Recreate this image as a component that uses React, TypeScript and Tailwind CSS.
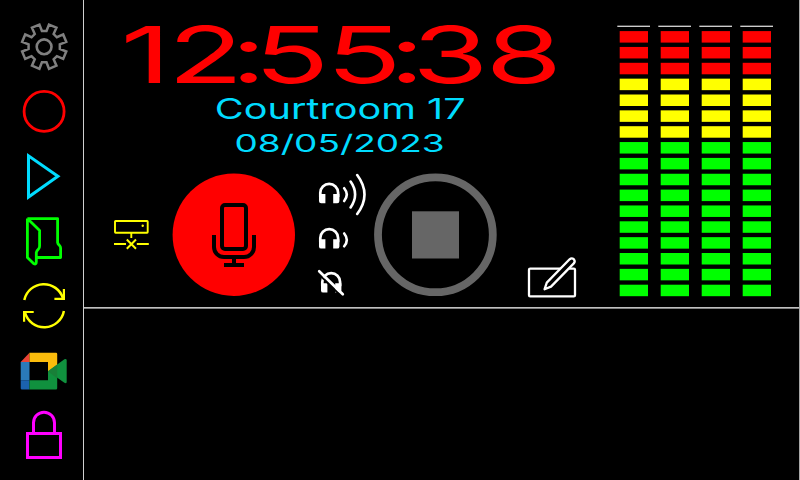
import type { ReactNode } from "react";

const CYAN = "#00dcff";

// Each sidebar icon sits in its own 65px row; the viewBox uses screen units.
function NavIcon({ y, label, children }: { y: number; label: string; children: ReactNode }) {
  return (
    <button aria-label={label} className="block h-[65px] w-full shrink-0">
      <svg className="block h-full w-full" viewBox={`0 ${y} 83 65`} fill="none">
        {children}
      </svg>
    </button>
  );
}

function Control({ x, w, label, children }: { x: number; w: number; label: string; children: ReactNode }) {
  return (
    <button aria-label={label} className="block h-full shrink-0" style={{ width: w }}>
      <svg className="block h-full w-full" viewBox={`${x} 168 ${w} 139`} fill="none">
        {children}
      </svg>
    </button>
  );
}

const gearPoints = Array.from({ length: 8 }, (_, k) =>
  [
    [8.3, 15.8],
    [12.2, 22.6],
    [32.8, 22.6],
    [36.7, 15.8],
  ].map(([deg, r]) => {
    const a = ((k * 45 + deg) * Math.PI) / 180;
    return `${(44.2 + r * Math.sin(a)).toFixed(2)},${(46.7 - r * Math.cos(a)).toFixed(2)}`;
  }),
)
  .flat()
  .join(" ");

function Headphones() {
  return (
    <>
      <path d="M320.3 197v-4.2a8.9 8.9 0 0 1 17.8 0v4.2" stroke="#fff" strokeWidth="2.7" />
      <path d="M319 194h6.4v9.3h-4.2a2.2 2.2 0 0 1-2.2-2.2zM333.2 194h6.2v7.1a2.2 2.2 0 0 1-2.2 2.2h-4z" fill="#fff" />
    </>
  );
}

function Meter() {
  return (
    <svg className="block h-full w-[204px] shrink-0" viewBox="595 0 204 307" role="img" aria-label="Level meters">
      {[620, 661, 702, 743].map((x) => (
        <g key={x}>
          <rect x={x - 2.7} y="25.7" width="32.7" height="1.1" fill="#fff" />
          {Array.from({ length: 17 }, (_, i) => (
            <rect
              key={i}
              x={x - 0.3}
              y={31.1 + i * 15.85}
              width="28.3"
              height="11.5"
              fill={i < 3 ? "#ff0000" : i < 7 ? "#ffff00" : "#00ff00"}
            />
          ))}
        </g>
      ))}
    </svg>
  );
}

export default function App() {
  return (
    <div className="flex h-[480px] w-[800px] overflow-hidden bg-black font-['Inter',sans-serif]">
      <nav className="flex w-[83px] shrink-0 flex-col pt-3.5">
        <NavIcon y={14} label="Settings">
          <polygon points={gearPoints} stroke="#808080" strokeWidth="2.5" />
          <circle cx="44.1" cy="46.8" r="7.4" stroke="#808080" strokeWidth="2.6" />
        </NavIcon>
        <NavIcon y={79} label="Record">
          <circle cx="44.1" cy="111.4" r="20" stroke="#f00" strokeWidth="2.8" />
        </NavIcon>
        <NavIcon y={144} label="Play">
          <path d="M28.5 155.8V197L57.9 176.3z" stroke={CYAN} strokeWidth="3" />
        </NavIcon>
        <NavIcon y={209} label="Files">
          <path
            d="M27.4 218.6H57.6V242.5Q57.8 244 59.5 245.5Q60.6 246.6 60.6 248V257.5H36.3M27.4 218.6V257.5L33.6 263.5Q36.3 265 36.3 262V252.5Q36.6 250.8 38.5 249Q39.6 248 39.6 246V230.5L27.4 218.6"
            stroke="#0f0"
            strokeWidth="2.8"
            strokeLinejoin="round"
          />
        </NavIcon>
        <NavIcon y={274} label="Sync">
          <path d="M24.3 300A20 20 0 0 1 63 298.4M63.9 311A20 20 0 0 1 25 312.6" stroke="#ff0" strokeWidth="2.5" />
          <path d="M54.4 298.9H63.9V289M33.7 312H24.1V321.8" stroke="#ff0" strokeWidth="2.2" />
        </NavIcon>
        <NavIcon y={339} label="Meet">
          <path d="M20.7 362L29.5 352.8V362z" fill="#ea4335" />
          <path d="M20.7 362h8.8v18.3h-8.8z" fill="#2a7ab9" />
          <path d="M20.7 380.3h8.8v9.2H22a1.3 1.3 0 0 1-1.3-1.3z" fill="#1b62ae" />
          <path d="M29.5 352.8H56a1.2 1.2 0 0 1 1.2 1.2v12l-9.2 6V362H29.5z" fill="#fbbc0c" />
          <path d="M29.5 380.3H48V371l9.2 5v12.3a1.2 1.2 0 0 1-1.2 1.2H29.5z" fill="#10913e" />
          <path d="M48 371.2L64.4 359.2q2.3-.8 2.3 1.2v21.5q-.2 2-2.3.9z" fill="#10913e" />
          <path d="M48 371.2L57.2 364.4v14z" fill="#188038" />
        </NavIcon>
        <NavIcon y={404} label="Lock">
          <path d="M27.5 433.5h33v24h-33zM33.5 433v-10.3a10.5 10.5 0 0 1 21 0V433" stroke="#f0f" strokeWidth="3" />
        </NavIcon>
      </nav>

      <div className="flex w-[717px] flex-col border-l border-r border-l-[#d0d0d0] border-r-[#a8a8a8]">
        <div className="flex h-[309px] border-b border-[#808080]">
          <div className="flex h-[308px] w-full border-b border-[#c0c0c0] pl-px">
            <main className="flex w-[510px] shrink-0 flex-col pt-2.5 text-center whitespace-nowrap">
              <div className="flex h-[89px] items-center justify-center pt-0.5">
                <time className="block scale-x-[1.58] text-[78.5px] leading-none font-normal tracking-[-2px] text-[#f00]">
                  1<span className="tracking-[-8px]">2:</span>5<span className="tracking-[-8px]">5:</span>38
                </time>
              </div>
              <div className="flex h-[19px] items-center justify-center">
                <h1 className="relative top-px scale-x-[1.39] text-[28.5px] leading-none font-normal text-[#00dcff]">
                  Courtroom 17
                </h1>
              </div>
              <div className="flex h-[50px] items-center justify-center pt-px">
                <p className="scale-x-[1.51] text-[24.5px] leading-none font-normal text-[#00dcff]">08/05/2023</p>
              </div>
              <div className="flex h-[139px]">
                <Control x={85} w={80} label="Network disconnected">
                  <rect x="115" y="221" width="32.7" height="11.7" rx="0.6" stroke="#ff0" strokeWidth="1.9" />
                  <circle cx="142.7" cy="225.8" r="1.2" fill="#ff0" />
                  <path d="M131.3 233v5M114 244h12M136.8 244h12" stroke="#ff0" strokeWidth="1.9" />
                  <path d="M126.8 239.5l9.2 9.2M136 239.5l-9.2 9.2" stroke="#ff0" strokeWidth="2" />
                </Control>
                <Control x={165} w={140} label="Microphone">
                  <circle cx="233.8" cy="234.8" r="61.2" fill="#f00" />
                  <rect x="222" y="205" width="24" height="44" rx="3" stroke="#000" strokeWidth="4" />
                  <path d="M214 235v12a10 10 0 0 0 10 10h20a10 10 0 0 0 10-10v-12M234 257v8M224 265h20" stroke="#000" strokeWidth="4" />
                </Control>
                <Control x={305} w={65} label="Headphone volume">
                  <Headphones />
                  <g stroke="#fff" strokeWidth="2.6" strokeLinecap="round">
                    <path d="M344.2 188.2q5.2 6.4 0 12.8M350.6 181.6q9 12.8 0 25.8M357.2 175q14.6 19.6 0 39" />
                  </g>
                  <g transform="translate(0 45.3)">
                    <Headphones />
                    <path d="M344.2 188.2q5.2 6.4 0 12.8" stroke="#fff" strokeWidth="2.6" strokeLinecap="round" />
                  </g>
                  <g transform="translate(2 89.3)">
                    <Headphones />
                  </g>
                  <path d="M318.2 273.6L341.4 296.2" stroke="#000" strokeWidth="2" />
                  <path d="M319.2 271.2L342.8 294.2" stroke="#fff" strokeWidth="2.7" strokeLinecap="round" />
                </Control>
                <Control x={370} w={130} label="Stop">
                  <circle cx="435.4" cy="234.8" r="57.4" stroke="#666" strokeWidth="7.8" />
                  <rect x="412" y="211.3" width="47" height="47.2" fill="#666" />
                </Control>
                <Control x={500} w={95} label="Notes">
                  <rect x="529" y="268.6" width="46" height="27.8" rx="1.2" stroke="#fff" strokeWidth="2.3" />
                  <path
                    d="M544.6 289.2L546.8 282.6L569.6 259.3Q571.6 257.4 573.8 259.2Q575.6 261.2 573.8 263.4L551 286.6z"
                    fill="#000"
                    stroke="#fff"
                    strokeWidth="2.3"
                    strokeLinejoin="round"
                  />
                </Control>
              </div>
            </main>
            <Meter />
          </div>
        </div>
      </div>
    </div>
  );
}
